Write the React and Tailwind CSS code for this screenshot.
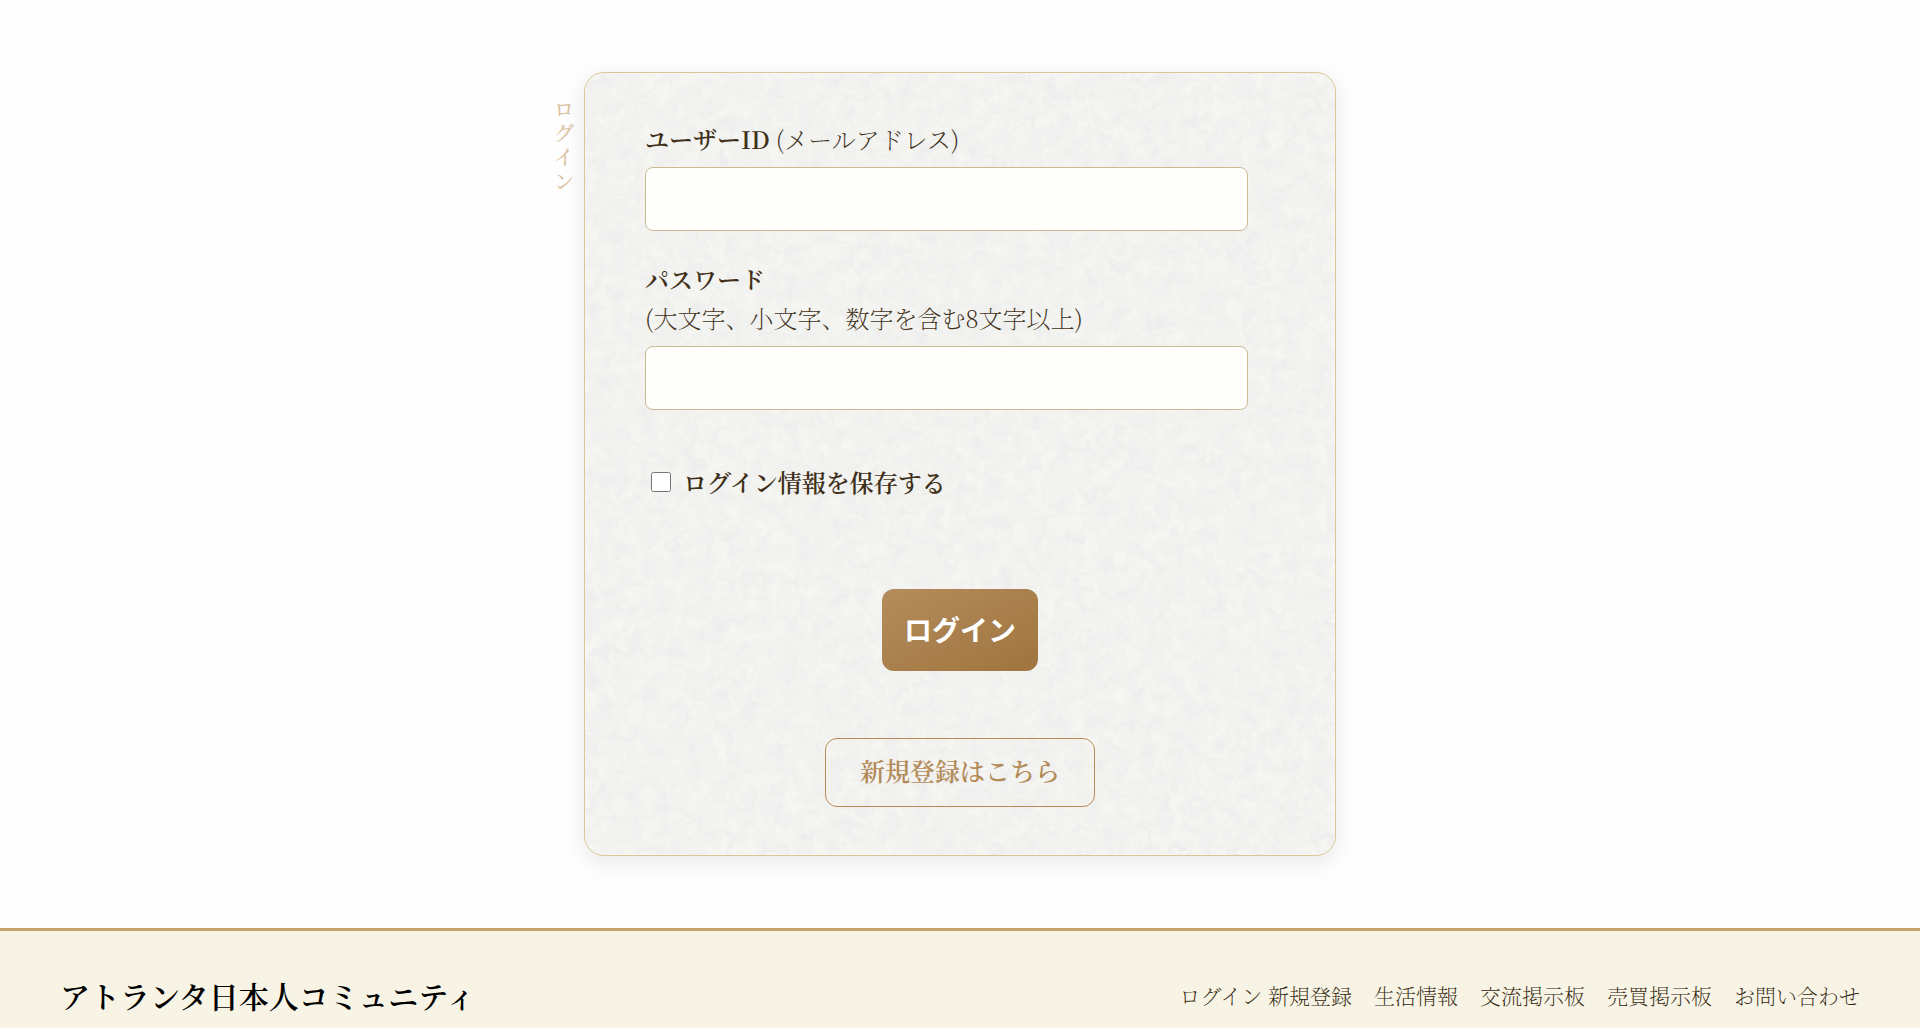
import React, { useState } from 'react';

const footerLinks = ['生活情報', '交流掲示板', '売買掲示板', 'お問い合わせ'];

// Washi paper grain behind the form
const PaperTexture = () => (
  <svg className="absolute inset-0 h-full w-full" aria-hidden="true">
    <filter id="washi" x="0" y="0" width="100%" height="100%" colorInterpolationFilters="sRGB">
      <feTurbulence type="fractalNoise" baseFrequency="0.07" numOctaves="4" seed="8" result="noise" />
      <feDisplacementMap in="noise" in2="noise" scale="28" xChannelSelector="G" yChannelSelector="B" />
      <feColorMatrix values="0 0 0 0 0.93  0 0 0 0 0.93  0 0 0 0 0.932  1.8 0 0 0 -0.5" />
    </filter>
    <rect width="100%" height="100%" filter="url(#washi)" />
  </svg>
);

const Field = ({ id, type, value, onChange, children }) => (
  <div className="flex flex-col gap-[9px]">
    <label htmlFor={id} className="leading-[39px] font-semibold">
      {children}
    </label>
    <input
      id={id}
      type={type}
      value={value}
      onChange={(e) => onChange(e.target.value)}
      className="h-16 w-full max-w-[603px] rounded-lg border border-[#c8ba94] bg-[#fefefd] px-4 outline-none focus:border-[#b38b59]"
    />
  </div>
);

const LoginForm = () => {
  const [userId, setUserId] = useState('');
  const [password, setPassword] = useState('');
  const [remember, setRemember] = useState(false);

  return (
    <form
      onSubmit={(e) => e.preventDefault()}
      className="relative overflow-hidden rounded-[20px] border border-[#d8c797] bg-[#f5f6f1] px-[60px] pt-[46px] pb-12 text-2xl text-[#40301a] shadow-[0_6px_24px_rgba(0,0,0,0.09)]"
    >
      <PaperTexture />
      <div className="relative flex flex-col">
        <div className="flex flex-col gap-7">
          <Field id="user-id" type="text" value={userId} onChange={setUserId}>
            ユーザーID <span className="font-extralight">(メールアドレス)</span>
          </Field>
          <Field id="password" type="password" value={password} onChange={setPassword}>
            パスワード
            <span className="block font-extralight">(大文字、小文字、数字を含む8文字以上)</span>
          </Field>
        </div>

        <label className="mt-[52px] ml-[6px] flex items-center gap-3 leading-[39px] font-semibold">
          <input
            type="checkbox"
            checked={remember}
            onChange={(e) => setRemember(e.target.checked)}
            className="size-5"
          />
          ログイン情報を保存する
        </label>

        <button
          type="submit"
          className="mt-[88px] h-[82px] self-center rounded-xl bg-linear-to-br from-[#b48d5c] to-[#9f743e] px-[22px] font-['Noto_Sans_CJK_JP',sans-serif] text-[28px] font-bold text-white"
        >
          ログイン
        </button>

        <a
          href="#register"
          className="mt-[67px] flex h-[69px] items-center self-center rounded-xl border border-[#b68d57] px-[34px] pb-1 text-[25px] font-semibold text-[#b38b59]"
        >
          新規登録はこちら
        </a>
      </div>
    </form>
  );
};

const Footer = () => (
  <footer className="flex flex-wrap items-center justify-between border-t-[3px] border-[#c4a46c] bg-[#f8f4e5] px-[60px] pt-[42px] pb-[10px]">
    <p className="text-[30px] leading-[45px] font-semibold text-black">アトランタ日本人コミュニティ</p>
    <nav className="flex flex-wrap gap-[22px] text-[21px] font-extralight text-[#33260f]">
      <span>
        <a href="#login">ログイン</a> <a href="#register">新規登録</a>
      </span>
      {footerLinks.map((label) => (
        <a key={label} href="#footer">
          {label}
        </a>
      ))}
    </nav>
  </footer>
);

export default function App() {
  return (
    <div lang="ja" className="bg-[#fefefe] font-['Noto_Serif_CJK_JP','Liberation_Serif','Noto_Sans_CJK_JP',serif]">
      <main className="grid grid-cols-[1fr_minmax(0,752px)_1fr] py-[72px]">
        <h1 className="mt-[25px] mr-[10px] w-5 justify-self-end text-xl leading-6 font-medium break-all text-[#dcc3a3]">
          ログイン
        </h1>
        <LoginForm />
      </main>
      <Footer />
    </div>
  );
}
